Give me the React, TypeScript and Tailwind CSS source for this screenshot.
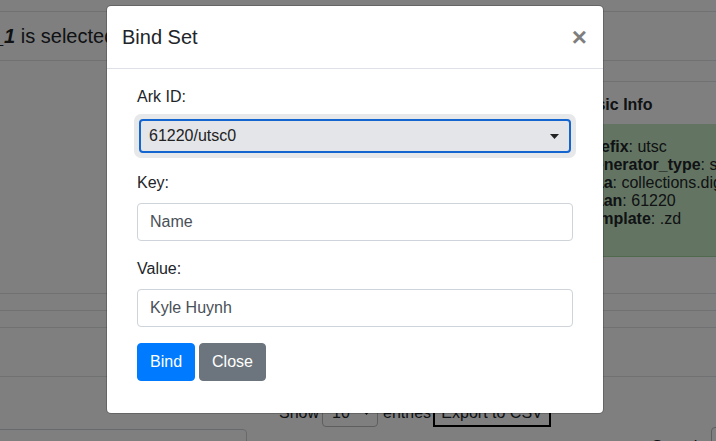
const infoRows = [
  { k: 'prefix', v: 'utsc' },
  { k: 'generator_type', v: 'sequential' },
  { k: 'naa', v: 'collections.digital.utsc.utoronto.ca' },
  { k: 'naan', v: '61220' },
  { k: 'template', v: '.zd' },
];

const Caret = ({ className = '' }: { className?: string }) => (
  <svg width="9" height="5" viewBox="0 0 9 5" className={className}>
    <polygon points="0,0 9,0 4.5,5" fill="currentColor" />
  </svg>
);

const Background = () => (
  <div className="text-[16px]">
    <div className="h-[12px] border-b border-[#dee2e6]" />
    <div className="flex h-[49px] items-center border-b border-[#dee2e6]">
      <h5 className="-ml-[7px] whitespace-nowrap text-[20px] font-medium leading-6">
        <em className="font-bold">_1</em> is selected
      </h5>
    </div>

    <div className="flex h-[196px]">
      <div className="flex-1" />
      <div className="w-[145px] pt-[20px]">
        <div className="flex h-[43px] items-center whitespace-nowrap border-t border-[#dee2e6] pl-[5px] pr-[14px] pt-[3px] font-bold">
          Basic Info
        </div>
        <div className="h-[133px] whitespace-nowrap border-b border-[#9fd49f] bg-[#c6eac4] px-[14px] pt-[14px] leading-[18px]">
          {infoRows.map((r) => (
            <div key={r.k}>
              <b>{r.k}</b>: {r.v}
            </div>
          ))}
        </div>
      </div>
    </div>

    <div className="h-[37px] border-b border-[#dee2e6]" />
    <div className="h-[17px] border-b border-[#dee2e6]" />
    <div className="h-[17px] border-b border-[#dee2e6]" />
    <div className="h-[49px] border-b border-[#dee2e6]" />

    {/* table controls */}
    <div className="mt-[21px] flex h-[29px] items-center whitespace-nowrap pl-[279px]">
      <span className="w-[40px]">Show</span>
      <div className="ml-[3px] flex h-[29px] w-[56px] items-center justify-between rounded-[4px] border border-[#bdbdbd] pl-[9px] pr-[6px]">
        10
        <Caret />
      </div>
      <span className="ml-[5px]">entries</span>
      <button className="ml-[2px] h-[28px] w-[118px] border-2 border-black bg-white">Export to CSV</button>
    </div>
    <div className="flex items-start justify-between">
      <div className="-ml-[10px] mt-[2px] h-[38px] w-[257px] rounded-[4px] border border-[#ced4da]" />
      <div className="-mr-[115px] flex items-start">
        <span className="mr-[4px] mt-[8px]">Search:</span>
        <div className="h-[30px] w-[120px] rounded-[4px] border border-[#bdbdbd]" />
      </div>
    </div>
  </div>
);

const Field = ({ label, value }: { label: string; value: string }) => (
  <div className="mb-4">
    <label className="mb-2 block leading-6">{label}</label>
    <input
      readOnly
      value={value}
      className="block h-[38px] w-full rounded-[4px] border border-[#ced4da] bg-white px-3 text-[#495057] outline-none"
    />
  </div>
);

const BindSetModal = () => (
  <div className="absolute left-[106px] top-[5px] w-[498px] rounded-[5px] border border-black/20 bg-white bg-clip-padding">
    <div className="flex items-start justify-between border-b border-[#dee2e6] py-4 pl-[15px] pr-4">
      <h5 className="text-[20px] font-medium leading-[30px]">Bind Set</h5>
      <button className="-my-4 -mr-4 ml-auto px-4 pt-[18px] text-[26px] font-bold leading-none text-black opacity-50">
        ×
      </button>
    </div>

    <div className="p-4">
      <form className="px-[14px] pb-4">
        <div className="mb-4">
          <label className="mb-2 block leading-6">Ark ID:</label>
          <div className="-mx-[3px] -my-[3px] rounded-[7px] bg-[#e7e8ea] p-[5px]">
            <div className="flex h-[34px] items-center justify-between rounded-[4px] border-2 border-[#1565d0] bg-[#e3e5e9] pl-[8px] pr-[10px] text-[#222]">
              61220/utsc0
              <Caret />
            </div>
          </div>
        </div>
        <Field label="Key:" value="Name" />
        <Field label="Value:" value="Kyle Huynh" />
        <div className="flex gap-1">
          <button type="button" className="rounded-[4px] border border-[#007bff] bg-[#007bff] px-3 py-1.5 leading-6 text-white">
            Bind
          </button>
          <button type="button" className="rounded-[4px] border border-[#6c757d] bg-[#6c757d] px-3 py-1.5 leading-6 text-white">
            Close
          </button>
        </div>
      </form>
    </div>
  </div>
);

export default function App() {
  return (
    <div className="relative h-[441px] w-[716px] overflow-hidden bg-white font-['Liberation_Sans',Arial,sans-serif] text-[16px] text-[#212529]">
      <Background />
      <div className="absolute inset-0 bg-black/50" />
      <BindSetModal />
    </div>
  );
}
